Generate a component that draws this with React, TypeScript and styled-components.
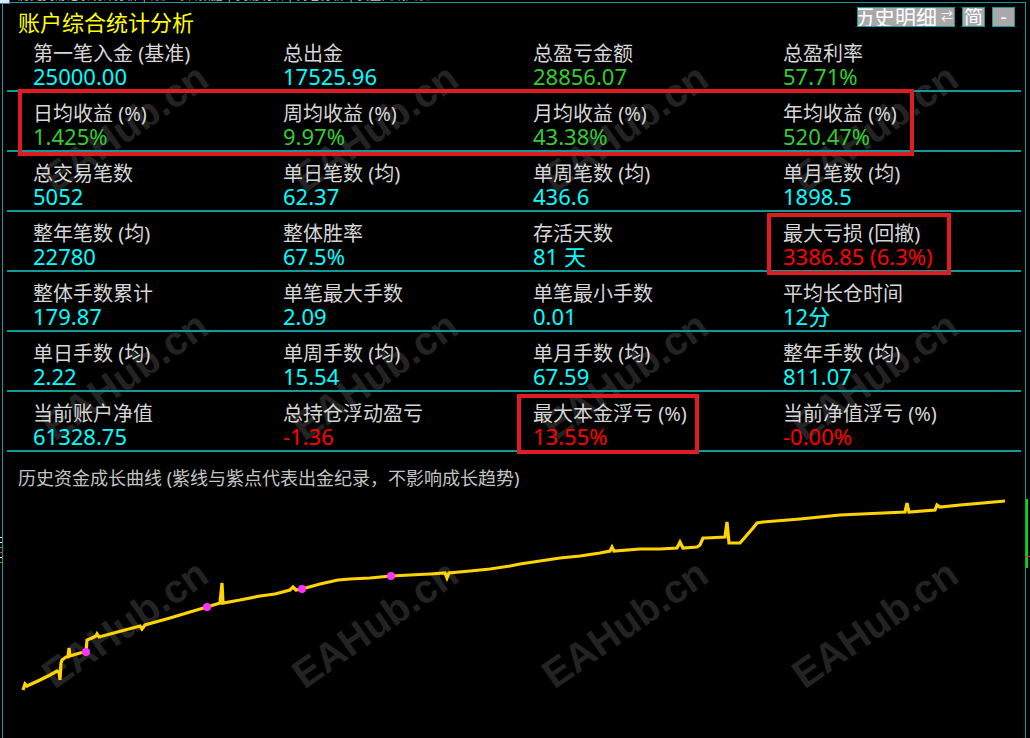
import React from 'react';
import styled, {createGlobalStyle} from 'styled-components';

const GlobalStyle = createGlobalStyle`
  html, body {
    margin: 0;
    padding: 0;
    background: #000;
    overflow: hidden;
  }
  body {
    font-family: "Noto Sans", "Noto Sans CJK SC", sans-serif;
  }
`

const TEAL = '#109a9a'

type StatItem = {
    label: string
    value: string
    color: string
}

const CYAN = '#00ffff'
const GREEN = '#33cc33'
const RED = '#ff0000'

const rows: StatItem[][] = [
    [
        {label: '第一笔入金 (基准)', value: '25000.00', color: CYAN},
        {label: '总出金', value: '17525.96', color: CYAN},
        {label: '总盈亏金额', value: '28856.07', color: GREEN},
        {label: '总盈利率', value: '57.71%', color: GREEN},
    ],
    [
        {label: '日均收益 (%)', value: '1.425%', color: GREEN},
        {label: '周均收益 (%)', value: '9.97%', color: GREEN},
        {label: '月均收益 (%)', value: '43.38%', color: GREEN},
        {label: '年均收益 (%)', value: '520.47%', color: GREEN},
    ],
    [
        {label: '总交易笔数', value: '5052', color: CYAN},
        {label: '单日笔数 (均)', value: '62.37', color: CYAN},
        {label: '单周笔数 (均)', value: '436.6', color: CYAN},
        {label: '单月笔数 (均)', value: '1898.5', color: CYAN},
    ],
    [
        {label: '整年笔数 (均)', value: '22780', color: CYAN},
        {label: '整体胜率', value: '67.5%', color: CYAN},
        {label: '存活天数', value: '81 天', color: CYAN},
        {label: '最大亏损 (回撤)', value: '3386.85 (6.3%)', color: RED},
    ],
    [
        {label: '整体手数累计', value: '179.87', color: CYAN},
        {label: '单笔最大手数', value: '2.09', color: CYAN},
        {label: '单笔最小手数', value: '0.01', color: CYAN},
        {label: '平均长仓时间', value: '12分', color: CYAN},
    ],
    [
        {label: '单日手数 (均)', value: '2.22', color: CYAN},
        {label: '单周手数 (均)', value: '15.54', color: CYAN},
        {label: '单月手数 (均)', value: '67.59', color: CYAN},
        {label: '整年手数 (均)', value: '811.07', color: CYAN},
    ],
    [
        {label: '当前账户净值', value: '61328.75', color: CYAN},
        {label: '总持仓浮动盈亏', value: '-1.36', color: RED},
        {label: '最大本金浮亏 (%)', value: '13.55%', color: RED},
        {label: '当前净值浮亏 (%)', value: '-0.00%', color: RED},
    ],
]

// page coords of the equity curve
const curve = [
    [23, 690], [25, 684], [27, 686], [40, 680], [50, 675], [57, 671], [59, 672], [60, 680], [61, 663], [62, 660],
    [66, 657], [68, 657], [69, 648], [70, 656], [80, 653], [86, 652], [87, 640], [92, 638], [96, 636], [97, 634],
    [99, 637], [110, 634], [125, 630], [140, 626], [142, 629], [145, 625], [170, 618], [190, 612], [207, 607],
    [220, 603], [222, 583], [223, 603], [240, 600], [260, 596], [275, 594], [290, 590], [293, 587], [296, 590],
    [302, 589], [320, 584], [338, 580], [350, 579], [370, 578], [391, 576], [410, 575], [430, 574], [445, 573],
    [447, 578], [449, 573], [470, 571], [490, 569], [510, 566], [520, 564], [540, 561], [560, 558], [580, 556],
    [600, 553], [610, 551], [612, 547], [614, 551], [640, 549], [660, 549], [677, 548], [680, 542], [683, 548],
    [697, 547], [700, 545], [703, 538], [706, 538], [725, 537], [727, 522], [729, 543], [740, 543], [747, 535],
    [753, 528], [757, 523], [763, 522], [800, 519], [840, 515], [883, 513], [905, 512], [907, 503], [909, 512],
    [935, 510], [937, 505], [940, 507], [960, 505], [983, 503], [1005, 501],
]

const dots = [[86, 652], [207, 607], [302, 589], [391, 576]]

const marks = [128, 376, 624].flatMap(y => [125, 375, 625, 875].map(x => ({x, y})))

const highlights = [
    {left: 15, top: 86, width: 896, height: 67},
    {left: 764, top: 210, width: 184, height: 62},
    {left: 514, top: 391, width: 182, height: 60},
]

export default function App() {
    return (
        <Screen>
            <GlobalStyle/>
            <CornerIcon/>
            <TopStrip>
                <span>历史交易记录统计分析 | 账户综合数据 | 交易明细 | 持仓分析 | 资金曲线图表</span>
            </TopStrip>
            <Panel>
                {marks.map((m, i) => (
                    <Watermark key={i} style={{left: m.x - 3, top: m.y - 3}}>EAHub.cn</Watermark>
                ))}
                <Content>
                    <Header>
                        <Title>账户综合统计分析</Title>
                        <Buttons>
                            <ToolButton $wide>历史明细 <Arrow>⇄</Arrow></ToolButton>
                            <ToolButton>简</ToolButton>
                            <ToolButton>-</ToolButton>
                        </Buttons>
                    </Header>
                    {rows.map((row, i) => (
                        <Row key={i}>
                            {row.map(item => (
                                <Cell key={item.label}>
                                    <Label>{item.label}</Label>
                                    <Value $color={item.color}>{item.value}</Value>
                                </Cell>
                            ))}
                        </Row>
                    ))}
                    <ChartSection>
                        <ChartTitle>历史资金成长曲线 (紫线与紫点代表出金纪录，不影响成长趋势)</ChartTitle>
                        <svg width="1022" height="248" viewBox="3 490 1022 248" style={{display: 'block'}}>
                            <polyline
                                points={curve.map(p => p.join(',')).join(' ')}
                                fill="none"
                                stroke="#ffd400"
                                strokeWidth="3.2"
                                strokeLinejoin="miter"
                            />
                            {dots.map(([x, y]) => (
                                <circle key={x} cx={x} cy={y} r="4" fill="#ff33ff"/>
                            ))}
                        </svg>
                    </ChartSection>
                </Content>
                {highlights.map((h, i) => (
                    <Highlight key={i} style={h}/>
                ))}
            </Panel>
            <SideBar/>
            <SideTick/>
            <LeftTicks>
                <i style={{background: '#fff'}}/>
                <i style={{background: '#fff'}}/>
                <i style={{background: '#1c1'}}/>
                <i style={{background: '#f22'}}/>
                <i style={{background: '#fff'}}/>
                <i style={{background: '#1c1'}}/>
            </LeftTicks>
        </Screen>
    )
}

const Screen = styled.div`
  position: relative;
  width: 1030px;
  height: 738px;
  overflow: hidden;
  background: #000;
`

const CornerIcon = styled.div`
  position: absolute;
  left: 0;
  top: 0;
  width: 9px;
  height: 3px;
  background: #dfe8f5;
  border-right: 1px solid #4a7bc0;
  border-bottom: 1px solid #4a7bc0;
  z-index: 3;
`

const TopStrip = styled.div`
  height: 2px;
  overflow: hidden;
  padding-left: 18px;
  color: #bbb;
  font-size: 12px;
  line-height: 12px;

  span {
    display: block;
    margin-top: -10px;
  }
`

const Panel = styled.div`
  position: relative;
  margin-left: 2px;
  width: 1024px;
  height: 760px;
  box-sizing: border-box;
  border: 1px solid ${TEAL};
  background: #000;
  overflow: hidden;
`

const Watermark = styled.div`
  position: absolute;
  z-index: 0;
  transform: translate(-50%, -50%) rotate(-35deg);
  font-family: "Liberation Sans", Arial, sans-serif;
  font-weight: 700;
  font-size: 40px;
  color: #232323;
  white-space: nowrap;
  pointer-events: none;
`

const Content = styled.div`
  position: relative;
  z-index: 1;
`

const Header = styled.div`
  display: flex;
  justify-content: space-between;
  align-items: flex-start;
  height: 29px;
  padding: 0 10px 0 15px;
`

const Title = styled.div`
  margin-top: 7px;
  font-size: 22px;
  line-height: 24px;
  color: #ffff00;
`

const Buttons = styled.div`
  display: flex;
  gap: 7px;
  margin-top: 4px;
`

const ToolButton = styled.div<{ $wide?: boolean }>`
  display: flex;
  align-items: center;
  justify-content: ${p => p.$wide ? 'flex-end' : 'center'};
  width: ${p => p.$wide ? '98px' : '23px'};
  height: 20px;
  box-sizing: border-box;
  border: 1px solid ${TEAL};
  background: #a9a9a9;
  color: #fff;
  font-size: ${p => p.$wide ? '21px' : '19px'};
  line-height: 18px;
  white-space: nowrap;
  overflow: hidden;
`

const Arrow = styled.span`
  font-size: 12px;
  margin-left: 4px;
  margin-right: 1px;
`

const Row = styled.div`
  display: grid;
  grid-template-columns: repeat(4, 250px);
  height: 60px;
  box-sizing: border-box;
  margin: 0 4px;
  padding: 11px 0 0 26px;
  border-bottom: 2px solid ${TEAL};
`

const Cell = styled.div`
  display: flex;
  flex-direction: column;
`

const Label = styled.div`
  font-size: 20px;
  line-height: 22px;
  color: #d6d6d6;
  white-space: nowrap;
`

const Value = styled.div<{ $color: string }>`
  font-size: 22px;
  line-height: 22px;
  color: ${p => p.$color};
  white-space: nowrap;
`

const ChartSection = styled.div`
  padding-top: 14px;
`

const ChartTitle = styled.div`
  padding-left: 15px;
  font-size: 18px;
  line-height: 24px;
  color: #c4c4c4;
  white-space: nowrap;
`

const Highlight = styled.div`
  position: absolute;
  z-index: 2;
  box-sizing: border-box;
  border: 4px solid #e11b22;
`

const SideBar = styled.div`
  position: absolute;
  left: 1026px;
  top: 499px;
  width: 2px;
  height: 69px;
  background: #00dd00;
`

const SideTick = styled.div`
  position: absolute;
  left: 1026px;
  top: 556px;
  width: 4px;
  height: 1px;
  background: #ff2020;
`

const LeftTicks = styled.div`
  position: absolute;
  left: 0;
  top: 537px;
  width: 2px;
  display: flex;
  flex-direction: column;
  gap: 4px;

  i {
    display: block;
    height: 1px;
  }
`
